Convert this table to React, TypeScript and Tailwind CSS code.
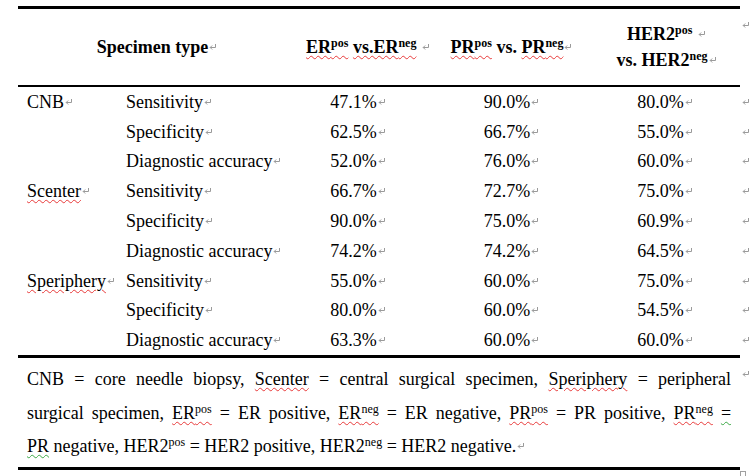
import React from "react";

function Mark({ block }: { block?: boolean }) {
  return (
    <svg
      width="7"
      height="6"
      viewBox="0 0 7 6"
      className={block ? "block" : "inline-block align-[3px] ml-[1px]"}
    >
      <path
        d="M6.5 0V3.5H1.2M3.2 1.5L1.2 3.5L3.2 5.5"
        fill="none"
        stroke="#9a9a9a"
        strokeWidth="1"
      />
    </svg>
  );
}

function W({ children, green }: { children: React.ReactNode; green?: boolean }) {
  return (
    <span
      className={
        green
          ? "underline decoration-wavy decoration-[#3aa845] decoration-1 underline-offset-[2px]"
          : "underline decoration-wavy decoration-[#e83a3a] decoration-1 underline-offset-[2px]"
      }
    >
      {children}
    </span>
  );
}

function Sup({ children }: { children: React.ReactNode }) {
  return <sup className="text-[12px] top-0 align-[6px]">{children}</sup>;
}

const rows: string[][] = [
  ["CNB", "Sensitivity", "47.1%", "90.0%", "80.0%"],
  ["", "Specificity", "62.5%", "66.7%", "55.0%"],
  ["", "Diagnostic accuracy", "52.0%", "76.0%", "60.0%"],
  ["Scenter", "Sensitivity", "66.7%", "72.7%", "75.0%"],
  ["", "Specificity", "90.0%", "75.0%", "60.9%"],
  ["", "Diagnostic accuracy", "74.2%", "74.2%", "64.5%"],
  ["Speriphery", "Sensitivity", "55.0%", "60.0%", "75.0%"],
  ["", "Specificity", "80.0%", "60.0%", "54.5%"],
  ["", "Diagnostic accuracy", "63.3%", "60.0%", "60.0%"],
];

export default function App() {
  return (
    <div className="w-[755px] h-[476px] overflow-hidden bg-white pt-[6px] [font-family:'Liberation_Serif',serif] text-[18px] text-black">
      {/* Header row */}
      <div className="flex ml-[18px]">
        <div className="flex w-[722px] h-[81px] items-center border-t-[3px] border-b-[2px] border-black font-bold leading-[26px]">
          <div className="w-[277px] text-center whitespace-nowrap">
            Specimen type
            <Mark />
          </div>
          <div className="w-[145px] text-center whitespace-nowrap">
            <W>
              ER<Sup>pos</Sup>
            </W>{" "}
            <W>
              vs.ER<Sup>neg</Sup>
            </W>{" "}
            <Mark />
          </div>
          <div className="w-[142px] text-center whitespace-nowrap">
            <W>
              PR<Sup>pos</Sup>
            </W>{" "}
            vs.{" "}
            <W>
              PR<Sup>neg</Sup>
            </W>
            <Mark />
          </div>
          <div className="w-[158px] pl-[10px] text-center">
            <div className="whitespace-nowrap">
              HER2<Sup>pos</Sup> <Mark />
            </div>
            <div className="whitespace-nowrap">
              vs. HER2<Sup>neg</Sup>
              <Mark />
            </div>
          </div>
        </div>
        <div className="w-[15px] pl-[2px] pt-[16px]">
          <Mark block />
        </div>
      </div>

      {/* Data rows */}
      {rows.map((r, i) => {
        const last = i === rows.length - 1;
        return (
          <div key={i} className="flex ml-[18px]">
            <div
              className={
                last
                  ? "flex w-[722px] h-[32.8px] items-center border-b-[3px] border-black leading-[26px]"
                  : "flex w-[722px] h-[29.8px] items-center leading-[26px]"
              }
            >
              <div className="w-[99px] pl-[9px] whitespace-nowrap">
                {r[0] === "" ? null : r[0] === "CNB" ? (
                  <>
                    CNB
                    <Mark />
                  </>
                ) : (
                  <>
                    <W>{r[0]}</W>
                    <Mark />
                  </>
                )}
              </div>
              <div className="w-[165px] pl-[9px] whitespace-nowrap">
                {r[1]}
                <Mark />
              </div>
              <div className="w-[151px] text-center whitespace-nowrap">
                {r[2]}
                <Mark />
              </div>
              <div className="w-[156px] text-center whitespace-nowrap">
                {r[3]}
                <Mark />
              </div>
              <div className="w-[151px] text-center whitespace-nowrap">
                {r[4]}
                <Mark />
              </div>
            </div>
            <div className="w-[15px] h-[29.8px] pl-[2px] flex items-center">
              <Mark block />
            </div>
          </div>
        );
      })}

      {/* Footnote */}
      <div className="flex ml-[18px]">
        <div className="w-[722px] border-b-[3px] border-black pt-[5px] pb-[3px] px-[9px] leading-[33.5px]">
          <div className="text-justify [text-align-last:justify]">
            CNB = core needle biopsy, <W>Scenter</W> = central surgical specimen,{" "}
            <W>Speriphery</W> = peripheral
          </div>
          <div className="text-justify [text-align-last:justify]">
            surgical specimen,{" "}
            <W>
              ER<Sup>pos</Sup>
            </W>{" "}
            = ER positive,{" "}
            <W>
              ER<Sup>neg</Sup>
            </W>{" "}
            = ER negative,{" "}
            <W>
              PR<Sup>pos</Sup>
            </W>{" "}
            = PR positive,{" "}
            <W>
              PR<Sup>neg</Sup>
            </W>{" "}
            <W green>=</W>
          </div>
          <div className="whitespace-nowrap">
            <W green>PR</W> negative, HER2<Sup>pos</Sup> = HER2 positive, HER2
            <Sup>neg</Sup> = HER2 negative.
            <Mark />
          </div>
        </div>
        <div className="w-[15px] pl-[2px] pt-[13px]">
          <Mark block />
        </div>
      </div>

      <div className="ml-[740px] mt-[1px] w-[6px] h-[6px] border border-[#a0a0a0]" />
    </div>
  );
}
